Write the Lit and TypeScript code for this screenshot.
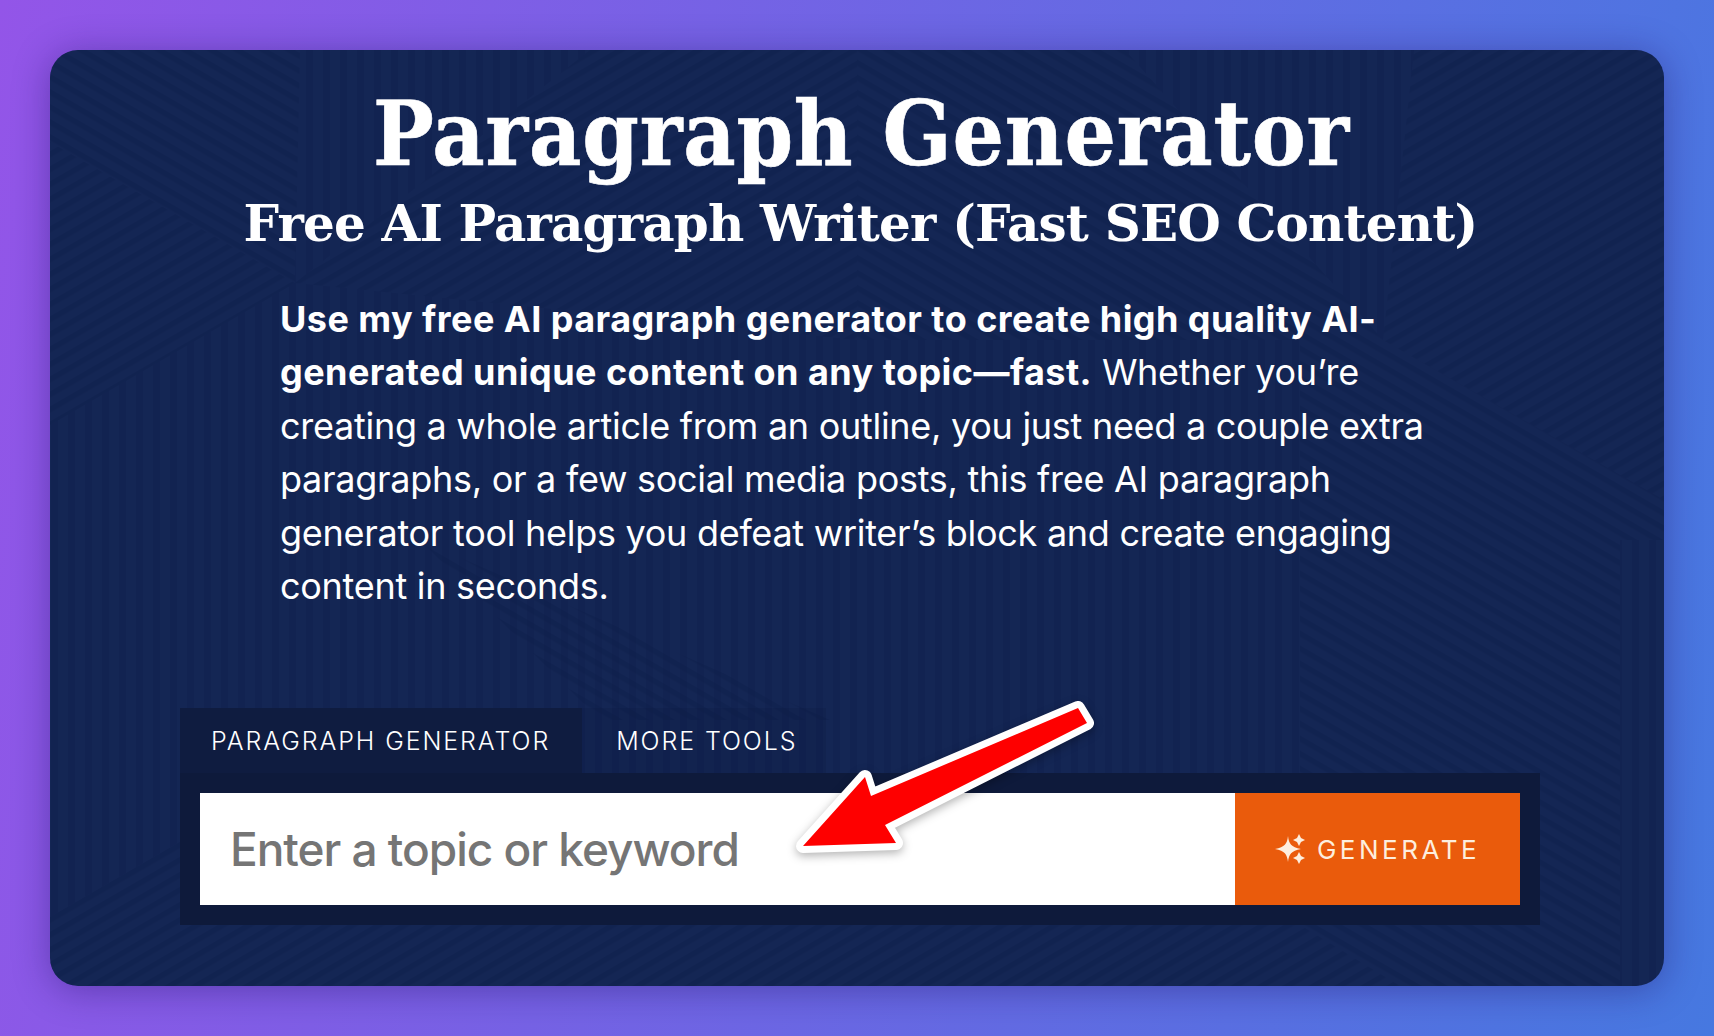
import { LitElement, html, css, svg } from "lit";
import { customElement } from "lit/decorators.js";

const regions: [string, string][] = [
  ["b", "50,50 300,50 295,283 50,142"],
  ["f", "50,142 295,283 50,425"],
  ["v", "300,50 590,50 295,283"],
  ["f", "590,50 857,50 857,340 295,283"],
  ["b", "857,50 1125,50 1383,340 857,340"],
  ["v", "1125,50 1414,50 1383,340"],
  ["f", "1414,50 1664,50 1664,500 1383,340"],
  ["v", "50,425 295,283 857,340 857,925 295,775 50,917"],
  ["b", "420,540 830,720 600,720"],
  ["v", "857,340 1300,340 1300,925 857,925"],
  ["b", "1300,340 1383,340 1664,500 1664,540 1620,540 1620,986 1400,986 1300,925"],
  ["v", "1620,540 1664,540 1664,986 1620,986"],
  ["f", "50,917 295,775 1300,925 1400,986 50,986"],
];

@customElement("app-root")
export class AppRoot extends LitElement {
  static styles = css`
    :host {
      display: block;
      width: 1714px;
      height: 1036px;
      box-sizing: border-box;
      padding: 50px;
      background: linear-gradient(100deg, #9355e8 0%, #4678e0 100%);
      overflow: hidden;
    }
    .card {
      position: relative;
      width: 1614px;
      height: 936px;
      border-radius: 28px;
      background: #142654;
      box-shadow: 0 4px 36px rgba(25, 10, 90, 0.38);
      overflow: hidden;
      color: #fff;
    }
    .pattern {
      position: absolute;
      inset: 0;
      width: 100%;
      height: 100%;
    }
    .content {
      position: relative;
      display: flex;
      flex-direction: column;
      height: 100%;
    }
    h1, h2 {
      margin: 0;
      text-align: center;
      font-weight: 700;
    }
    h1 {
      margin-top: 29px;
      padding-left: 9px;
      font-family: "DejaVu Serif Condensed", "DejaVu Serif", serif;
      font-stretch: condensed;
      font-size: 90px;
      line-height: 108px;
      letter-spacing: 0.8px;
      -webkit-text-stroke: 0.6px #fff;
    }
    h2 {
      font-family: "DejaVu Serif", serif;
      padding-left: 7px;
      font-size: 50px;
      line-height: 62px;
      letter-spacing: -0.83px;
      margin-top: 6px;
    }
    p {
      margin: 38px 0 0 230px;
      font-family: Inter, sans-serif;
      font-size: 36px;
      line-height: 53.4px;
      font-weight: 400;
      letter-spacing: -0.28px;
      white-space: nowrap;
    }
    p b { font-weight: 700; letter-spacing: 0.45px; }
    .tool {
      margin: 95px 0 0 130px;
      width: 1360px;
    }
    .tabs { display: flex; height: 65px; }
    .tab {
      display: flex;
      align-items: center;
      padding: 0 32px 0 31px;
      font-family: Inter, sans-serif;
      font-size: 25px;
      font-weight: 350;
      letter-spacing: 1.9px;
      color: #fff;
      background: rgba(10, 20, 50, 0.12);
    }
    .tab + .tab { padding-left: 34px; padding-right: 29px; }
    .tab.active { background: #0f1c40; }
    .form {
      display: flex;
      padding: 20px;
      height: 152px;
      box-sizing: border-box;
      background: #0e1a3b;
    }
    input {
      flex: 1;
      min-width: 0;
      border: 0;
      outline: 0;
      margin: 0;
      padding: 0 30px;
      background: #fff;
      font-family: Inter, sans-serif;
      font-size: 46px;
      font-weight: 500;
      letter-spacing: -1.03px;
      color: #333;
    }
    input::placeholder { color: #757575; opacity: 1; }
    .generate {
      width: 285px;
      border: 0;
      padding: 0;
      background: #ea5b0c;
      color: #fdeede;
      display: flex;
      align-items: center;
      justify-content: center;
      gap: 12px;
      font-family: Inter, sans-serif;
      font-size: 26px;
      font-weight: 400;
      letter-spacing: 3.5px;
    }
    .generate svg { width: 30px; height: 30px; }
    .arrow {
      position: absolute;
      left: 0;
      top: 0;
      width: 1614px;
      height: 936px;
      pointer-events: none;
      overflow: visible;
      filter: drop-shadow(0 3px 5px rgba(0, 0, 0, 0.3));
    }
  `;

  render() {
    return html`
      <div class="card">
        <svg class="pattern" viewBox="50 50 1614 936" aria-hidden="true">
          <defs>
            <pattern id="v" width="17" height="17" patternUnits="userSpaceOnUse">
              <rect width="7" height="17" fill="#0e1c4a" fill-opacity=".32"></rect>
            </pattern>
            <pattern id="b" width="13" height="13" patternUnits="userSpaceOnUse" patternTransform="rotate(30)">
              <rect width="13" height="5.5" fill="#0e1c4a" fill-opacity=".38"></rect>
            </pattern>
            <pattern id="f" width="13" height="13" patternUnits="userSpaceOnUse" patternTransform="rotate(-30)">
              <rect width="13" height="5.5" fill="#0e1c4a" fill-opacity=".38"></rect>
            </pattern>
          </defs>
          ${regions.map(([k, pts]) => svg`<polygon points=${pts} fill="url(#${k})"></polygon>`)}
        </svg>
        <div class="content">
          <h1>Paragraph Generator</h1>
          <h2>Free AI Paragraph Writer (Fast SEO Content)</h2>
          <p><b>Use my free AI paragraph generator to create high quality AI-<br />generated unique content on any topic—fast.</b> Whether you’re<br />creating a whole article from an outline, you just need a couple extra<br />paragraphs, or a few social media posts, this free AI paragraph<br />generator tool helps you defeat writer’s block and create engaging<br />content in seconds.</p>
          <div class="tool">
            <div class="tabs">
              <div class="tab active">PARAGRAPH GENERATOR</div>
              <div class="tab">MORE TOOLS</div>
            </div>
            <div class="form">
              <input type="text" placeholder="Enter a topic or keyword" />
              <button class="generate">
                <svg viewBox="0 0 30 30" fill="currentColor" aria-hidden="true">
                  <path d="M13 2 C14 10 16 13 26 15 C16 17 14 20 13 28 C12 20 10 17 0 15 C10 13 12 10 13 2Z"></path>
                  <path d="M24 0 L26 4 L30 6 L26 8 L24 12 L22 8 L18 6 L22 4Z"></path>
                  <path d="M24 18 L26 22 L30 24 L26 26 L24 30 L22 26 L18 24 L22 22Z"></path>
                </svg>
                GENERATE
              </button>
            </div>
          </div>
        </div>
        <svg class="arrow" viewBox="50 50 1614 936" aria-hidden="true">
          <polygon points="1078,708 1087,723 885,825 896,843 803,846 865,777 871,796" fill="#fe0000" stroke="#fff" stroke-width="14" stroke-linejoin="round" paint-order="stroke"></polygon>
        </svg>
      </div>
    `;
  }
}
